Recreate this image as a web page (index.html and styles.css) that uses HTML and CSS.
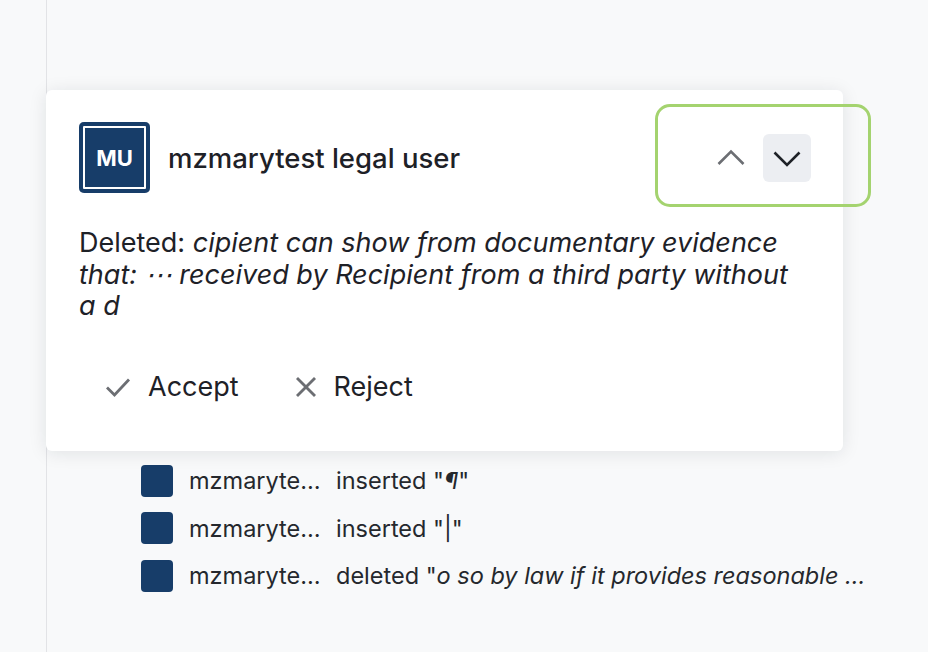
FILE: index.html
```html
<!DOCTYPE html>
<html>
<head>
    <title>Track Changes</title>
    <link rel="stylesheet" href="styles.css">
</head>
<body>
    <div class="layout">
        <div class="rail"></div>

        <div class="main">
            <!-- Current change card -->
            <div class="card">
                <div class="card-head">
                    <div class="avatar">MU</div>
                    <div class="name">mzmarytest legal user</div>
                    <div class="nav">
                        <button class="nav-btn" title="Previous change">
                            <svg width="28" height="28" viewBox="0 0 28 28"><polyline points="1.5,20 14,7.5 26.5,20" /></svg>
                        </button>
                        <button class="nav-btn active" title="Next change">
                            <svg width="28" height="28" viewBox="0 0 28 28"><polyline points="1.5,8.5 14,21 26.5,8.5" /></svg>
                        </button>
                    </div>
                    <div class="focus-ring"></div>
                </div>

                <p class="change-text">
                    <span class="label">Deleted:</span> <em>cipient can show from documentary evidence that: ⋯ received by Recipient from a third party without a d</em>
                </p>

                <div class="actions">
                    <button class="action-btn">
                        <svg width="26" height="22" viewBox="0 0 26 22"><polyline points="2,11.5 9.5,19 24,3.5" /></svg>
                        Accept
                    </button>
                    <button class="action-btn">
                        <svg width="22" height="22" viewBox="0 0 22 22"><line x1="2" y1="2" x2="20" y2="20" /><line x1="20" y1="2" x2="2" y2="20" /></svg>
                        Reject
                    </button>
                </div>
            </div>

            <!-- Other changes -->
            <ul class="history">
                <li class="history-row">
                    <span class="swatch"></span>
                    <span class="who">mzmaryte…</span>
                    <span class="what">inserted "<em>¶</em>"</span>
                </li>
                <li class="history-row">
                    <span class="swatch"></span>
                    <span class="who">mzmaryte…</span>
                    <span class="what">inserted "|"</span>
                </li>
                <li class="history-row">
                    <span class="swatch"></span>
                    <span class="who">mzmaryte…</span>
                    <span class="what">deleted "<em>o so by law if it provides reasonable …</em></span>
                </li>
            </ul>
        </div>
    </div>
</body>
</html>
```

FILE: styles.css
```css
:root {
    --bg-color: #f8f9fa;
    --text-color: #1e2127;
    --muted: #6c6e73;
    --brand: #173d69;
    --rail-line: #e2e3e6;
    --btn-active: #eceef2;
    --focus: #a4d36f;
}

body {
    font-family: Inter, "Noto Sans", sans-serif;
    margin: 0;
    padding: 0;
    background-color: var(--bg-color);
    color: var(--text-color);
}

.layout {
    display: flex;
    min-height: 100vh;
}

.rail {
    width: 46px;
    flex-shrink: 0;
    border-right: 1px solid var(--rail-line);
}

.main {
    display: flex;
    flex-direction: column;
    padding-top: 90px;
}

.card {
    position: relative;
    width: 797px;
    box-sizing: border-box;
    margin-left: -1px;
    padding: 32px 32px 40px 33px;
    background-color: #fff;
    border-radius: 6px;
    box-shadow: 0 2px 18px rgba(20, 25, 40, 0.10);
}

.card-head {
    display: flex;
    align-items: center;
    height: 71px;
}

.avatar {
    width: 71px;
    height: 71px;
    box-sizing: border-box;
    display: flex;
    align-items: center;
    justify-content: center;
    background-color: var(--brand);
    border-radius: 5px;
    box-shadow: inset 0 0 0 4px var(--brand), inset 0 0 0 6px #fff;
    color: #fff;
    font-size: 22px;
    font-weight: 700;
}

.name {
    margin-left: 18px;
    font-size: 27.5px;
    font-weight: 500;
}

.nav {
    display: flex;
    gap: 8px;
    margin-left: auto;
}

.nav-btn {
    width: 48px;
    height: 48px;
    display: flex;
    align-items: center;
    justify-content: center;
    padding: 0;
    border: none;
    border-radius: 6px;
    background: transparent;
    cursor: pointer;
}

.nav-btn svg {
    fill: none;
    stroke: var(--muted);
    stroke-width: 2.6;
}

.nav-btn.active {
    background-color: var(--btn-active);
}

.nav-btn.active svg {
    stroke: var(--text-color);
}

.focus-ring {
    position: absolute;
    left: 609px;
    top: 14px;
    width: 216px;
    height: 103px;
    box-sizing: border-box;
    border: 3.5px solid var(--focus);
    border-radius: 15px;
    pointer-events: none;
}

.change-text {
    margin: 34px 0 0;
    font-size: 27px;
    line-height: 31.5px;
}

.actions {
    display: flex;
    gap: 24px;
    margin-top: 41px;
    margin-left: 10px;
}

.action-btn {
    display: flex;
    align-items: center;
    gap: 17px;
    height: 48px;
    padding: 0 16px;
    border: none;
    background: transparent;
    font-family: inherit;
    font-size: 27px;
    color: var(--text-color);
    cursor: pointer;
}

.action-btn svg {
    fill: none;
    stroke: var(--muted);
    stroke-width: 2.8;
}

.history {
    list-style: none;
    margin: 14px 0 0 94px;
    padding: 0;
    display: flex;
    flex-direction: column;
    gap: 15.5px;
}

.history-row {
    display: flex;
    align-items: center;
    height: 32px;
    font-size: 23.5px;
    color: #25282d;
    white-space: nowrap;
}

.swatch {
    width: 32px;
    height: 32px;
    border-radius: 4px;
    background-color: var(--brand);
    margin-right: 16px;
}

.who {
    width: 147px;
}
```
